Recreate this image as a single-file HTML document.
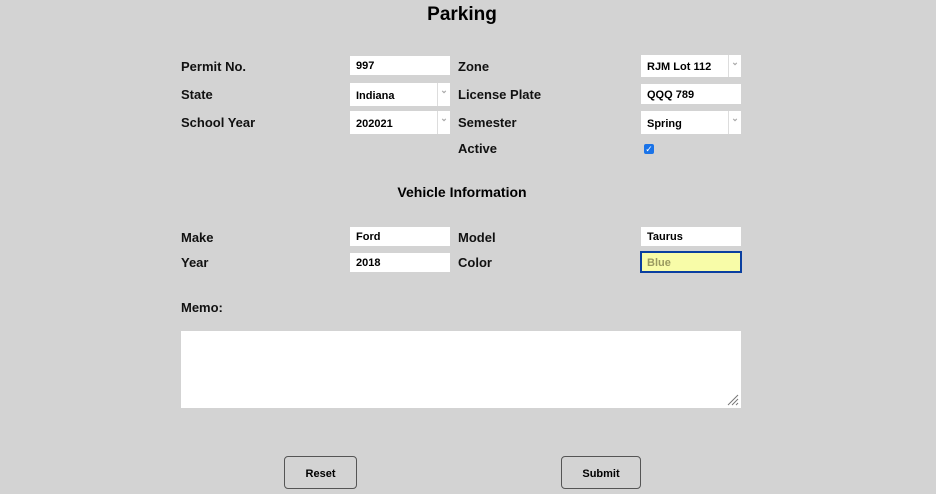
<!DOCTYPE html>
<html><head><style>
body{margin:0;width:936px;height:494px;background:#d3d3d3;font-family:"Liberation Sans",sans-serif;position:relative;overflow:hidden}
.a{position:absolute}
.l{position:absolute;font-weight:bold;font-size:13px;color:#111;left:181px}
.l2{left:458px}
.i{position:absolute;background:#fff;font-size:11px;font-weight:bold;color:#000;box-sizing:border-box;padding-left:6px;width:100px}
.s:after{content:"⌄";position:absolute;right:0;top:0;width:12px;border-left:1px solid #ddd;height:100%;color:#aaa;font-size:9px;text-align:center;line-height:14px}
.b{position:absolute;top:456px;height:33px;border:1px solid #555;border-radius:4px;font-size:11px;font-weight:bold;text-align:center;line-height:34px;box-sizing:border-box}
</style></head><body>
<div class="a" style="left:0;width:924px;top:4px;text-align:center;font-size:19px;font-weight:bold">Parking</div>
<div class="l" style="top:59px">Permit No.</div>
<div class="l" style="top:87px">State</div>
<div class="l" style="top:115px">School Year</div>
<div class="l l2" style="top:59px">Zone</div>
<div class="l l2" style="top:87px">License Plate</div>
<div class="l l2" style="top:115px">Semester</div>
<div class="l l2" style="top:141px">Active</div>
<div class="i" style="left:350px;top:56px;height:19px;line-height:21px">997</div>
<div class="i s" style="left:350px;top:83px;height:23px;line-height:26px">Indiana</div>
<div class="i s" style="left:350px;top:111px;height:23px;line-height:26px">202021</div>
<div class="i s" style="left:641px;top:55px;height:22px;line-height:24px">RJM Lot 112</div>
<div class="i" style="left:641px;top:84px;height:20px;line-height:22px">QQQ 789</div>
<div class="i s" style="left:641px;top:111px;height:23px;line-height:26px">Spring</div>
<div class="a" style="left:644px;top:144px;width:10px;height:10px;background:#1a73e8;border-radius:2px;color:#fff;font-size:9px;line-height:10px;text-align:center">✓</div>
<div class="a" style="left:0;width:924px;top:184px;text-align:center;font-size:14px;font-weight:bold">Vehicle Information</div>
<div class="l" style="top:230px">Make</div>
<div class="l" style="top:255px">Year</div>
<div class="l l2" style="top:230px">Model</div>
<div class="l l2" style="top:255px">Color</div>
<div class="i" style="left:350px;top:227px;height:19px;line-height:21px">Ford</div>
<div class="i" style="left:350px;top:253px;height:19px;line-height:21px">2018</div>
<div class="i" style="left:641px;top:227px;height:19px;line-height:21px">Taurus</div>
<div class="i" style="left:640px;top:251px;width:102px;height:22px;line-height:20px;background:#f8fca8;border:2px solid #0a3fa0;color:#9a9a60;padding-left:5px">Blue</div>
<div class="l" style="top:300px">Memo:</div>
<div class="a" style="left:181px;top:331px;width:560px;height:77px;background:#fff"></div>
<svg class="a" style="left:727px;top:394px" width="12" height="12"><path d="M11 1L1 11M11 5L5 11M11 9L9 11" stroke="#777" stroke-width="1"/></svg>
<div class="b" style="left:284px;width:73px">Reset</div>
<div class="b" style="left:561px;width:80px">Submit</div>
</body></html>
